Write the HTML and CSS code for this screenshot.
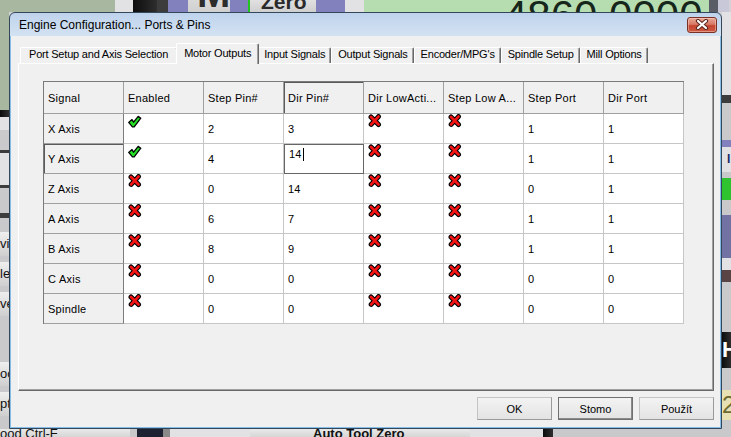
FILE: index.html
```html
<!DOCTYPE html>
<html lang="cs">
<head>
  <meta charset="UTF-8">
  <meta name="viewport" content="width=device-width, initial-scale=1.0">
  <title>Engine Configuration... Ports &amp; Pins</title>
  <link rel="stylesheet" href="styles.css">
</head>
<body>
  <!-- grid state icons -->
  <svg class="sprites" xmlns="http://www.w3.org/2000/svg">
    <symbol id="ico-yes" viewBox="0 0 14 14">
      <path d="M0.7 8.4 L4 5.6 L5.6 8.2 L10.2 2.4 L12.8 4.2 L6.2 12.8 L4.4 12.8 Z" fill="#24e024" stroke="#000" stroke-width="1.3" stroke-linejoin="round"/>
    </symbol>
    <symbol id="ico-no" viewBox="0 0 14 14">
      <path d="M3 3 L10.5 10.5 M10.5 2.6 L3.2 10.4" stroke="#000" stroke-width="5" stroke-linecap="round"/>
      <path d="M3 3 L10.5 10.5 M10.5 2.6 L3.2 10.4" stroke="#f41414" stroke-width="2.8" stroke-linecap="round"/>
    </symbol>
  </svg>

  <div class="screen">
    <!-- Mach3 screen behind the dialog -->
    <div class="strip strip-top">
      <span class="seg w115 c-sage"></span>
      <span class="seg w18 c-pale"></span>
      <span class="seg w24 c-black"></span>
      <span class="seg w11 c-dark"></span>
      <span class="seg w20 c-violet"></span>
      <span class="seg w42 c-key key-m">M</span>
      <span class="seg w18 c-violet"></span>
      <span class="seg w2 c-led"></span>
      <span class="seg w66 c-key key-zero">Zero</span>
      <span class="seg w29 c-violet"></span>
      <span class="seg w19 c-pale"></span>
      <span class="seg w345 c-dro">4860.0000</span>
      <span class="seg w9 c-frame"></span>
      <span class="seg w11 c-lilac"></span>
    </div>

    <div class="side side-left">
      <span class="blk h98 c-sage"></span>
      <span class="blk h7 c-black"></span>
      <span class="blk h13 c-pale"></span>
      <span class="blk h20 c-grey"></span>
      <span class="blk h3 c-dark"></span>
      <span class="blk h32 c-pale"></span>
      <span class="blk h3 c-dark"></span>
      <span class="blk h25 c-grey"></span>
      <span class="blk h5 c-dark"></span>
      <span class="blk h14 c-grey"></span>
      <span class="blk h24 c-key cut">vi</span>
      <span class="blk h6 c-grey"></span>
      <span class="blk h24 c-key cut">le</span>
      <span class="blk h6 c-grey"></span>
      <span class="blk h24 c-key cut">ve</span>
      <span class="blk h46 c-grey"></span>
      <span class="blk h24 c-key cut">oo</span>
      <span class="blk h6 c-grey"></span>
      <span class="blk h24 c-key cut">pt</span>
      <span class="blk h13 c-grey"></span>
    </div>

    <div class="dialog">
      <div class="titlebar">
        <span class="title">Engine Configuration... Ports &amp; Pins</span>
        <button class="close" type="button">
          <svg width="14" height="11" viewBox="0 0 14 11">
            <path d="M3 2 L11 9 M11 2 L3 9" stroke="#5b2720" stroke-width="4.2" stroke-linecap="round"/>
            <path d="M3 2 L11 9 M11 2 L3 9" stroke="#fff" stroke-width="2.2" stroke-linecap="round"/>
          </svg>
        </button>
      </div>

      <div class="client">
        <div class="tabs">
          <div class="tab tab-first">Port Setup and Axis Selection</div>
          <div class="tab active">Motor Outputs</div>
          <div class="tab">Input Signals</div>
          <div class="tab">Output Signals</div>
          <div class="tab">Encoder/MPG's</div>
          <div class="tab">Spindle Setup</div>
          <div class="tab">Mill Options</div>
        </div>

        <div class="panel">
          <div class="grid">
            <div class="cell head">Signal</div>
            <div class="cell head">Enabled</div>
            <div class="cell head">Step Pin#</div>
            <div class="cell head cur">Dir Pin#</div>
            <div class="cell head">Dir LowActi...</div>
            <div class="cell head">Step Low A...</div>
            <div class="cell head">Step Port</div>
            <div class="cell head">Dir Port</div>

            <div class="cell row">X Axis</div>
            <div class="cell icon"><svg><use href="#ico-yes"/></svg></div>
            <div class="cell">2</div>
            <div class="cell">3</div>
            <div class="cell icon"><svg><use href="#ico-no"/></svg></div>
            <div class="cell icon"><svg><use href="#ico-no"/></svg></div>
            <div class="cell">1</div>
            <div class="cell">1</div>

            <div class="cell row cur">Y Axis</div>
            <div class="cell icon"><svg><use href="#ico-yes"/></svg></div>
            <div class="cell">4</div>
            <div class="cell edit">14<span class="caret"></span></div>
            <div class="cell icon"><svg><use href="#ico-no"/></svg></div>
            <div class="cell icon"><svg><use href="#ico-no"/></svg></div>
            <div class="cell">1</div>
            <div class="cell">1</div>

            <div class="cell row">Z Axis</div>
            <div class="cell icon"><svg><use href="#ico-no"/></svg></div>
            <div class="cell">0</div>
            <div class="cell">14</div>
            <div class="cell icon"><svg><use href="#ico-no"/></svg></div>
            <div class="cell icon"><svg><use href="#ico-no"/></svg></div>
            <div class="cell">0</div>
            <div class="cell">1</div>

            <div class="cell row">A Axis</div>
            <div class="cell icon"><svg><use href="#ico-no"/></svg></div>
            <div class="cell">6</div>
            <div class="cell">7</div>
            <div class="cell icon"><svg><use href="#ico-no"/></svg></div>
            <div class="cell icon"><svg><use href="#ico-no"/></svg></div>
            <div class="cell">1</div>
            <div class="cell">1</div>

            <div class="cell row">B Axis</div>
            <div class="cell icon"><svg><use href="#ico-no"/></svg></div>
            <div class="cell">8</div>
            <div class="cell">9</div>
            <div class="cell icon"><svg><use href="#ico-no"/></svg></div>
            <div class="cell icon"><svg><use href="#ico-no"/></svg></div>
            <div class="cell">1</div>
            <div class="cell">1</div>

            <div class="cell row">C Axis</div>
            <div class="cell icon"><svg><use href="#ico-no"/></svg></div>
            <div class="cell">0</div>
            <div class="cell">0</div>
            <div class="cell icon"><svg><use href="#ico-no"/></svg></div>
            <div class="cell icon"><svg><use href="#ico-no"/></svg></div>
            <div class="cell">0</div>
            <div class="cell">0</div>

            <div class="cell row">Spindle</div>
            <div class="cell icon"><svg><use href="#ico-no"/></svg></div>
            <div class="cell">0</div>
            <div class="cell">0</div>
            <div class="cell icon"><svg><use href="#ico-no"/></svg></div>
            <div class="cell icon"><svg><use href="#ico-no"/></svg></div>
            <div class="cell">0</div>
            <div class="cell">0</div>
          </div>
        </div>

        <div class="actions">
          <button class="btn" type="button">OK</button>
          <button class="btn default" type="button">Stomo</button>
          <button class="btn" type="button">Použít</button>
        </div>
      </div>
    </div>

    <div class="side side-right">
      <span class="blk h83 c-pale"></span>
      <span class="blk h8 c-dark"></span>
      <span class="blk h37 c-grey"></span>
      <span class="blk h7 c-violet"></span>
      <span class="blk h25 c-pale glyph-i">I</span>
      <span class="blk h6 c-grey"></span>
      <span class="blk h22 c-green"></span>
      <span class="blk h15 c-grey"></span>
      <span class="blk h43 c-slate"></span>
      <span class="blk h12 c-pale"></span>
      <span class="blk h12 c-brown"></span>
      <span class="blk h50 c-grey"></span>
      <span class="blk h36 c-black glyph-h">H</span>
      <span class="blk h22 c-grey"></span>
      <span class="blk h30 c-cream glyph-2">2</span>
      <span class="blk h9 c-grey"></span>
    </div>

    <div class="strip strip-bottom">
      <span class="seg w130 c-key label">ood Ctrl-F</span>
      <span class="seg w7 c-grey"></span>
      <span class="seg w26 c-navy"></span>
      <span class="seg w7 c-mid"></span>
      <span class="seg w80 c-pale"></span>
      <span class="seg w220 c-key label label-bold">Auto Tool Zero</span>
      <span class="seg w73 c-pale"></span>
      <span class="seg w10 c-black"></span>
      <span class="seg w178 c-grey"></span>
    </div>
  </div>
</body>
</html>
```

FILE: styles.css
```css
* {
  margin: 0;
  padding: 0;
  box-sizing: border-box;
}

body {
  width: 731px;
  height: 437px;
  overflow: hidden;
  font-family: "Liberation Sans", Arial, sans-serif;
  font-size: 11px;
  color: #000;
  background: #d2d2d6;
}

.sprites {
  display: none;
}

/* whole window: app behind, dialog in the middle cell */
.screen {
  display: grid;
  grid-template-columns: 9px 713px 9px;
  grid-template-rows: 12px 417px 8px;
  width: 731px;
  height: 437px;
}

.strip {
  grid-column: 1 / -1;
  display: flex;
  overflow: hidden;
}

.side {
  display: flex;
  flex-direction: column;
  overflow: hidden;
}

.seg,
.blk {
  display: block;
  flex: none;
  overflow: hidden;
  white-space: nowrap;
}

.w2 { width: 2px; }
.w7 { width: 7px; }
.w9 { width: 9px; }
.w10 { width: 10px; }
.w11 { width: 11px; }
.w18 { width: 18px; }
.w19 { width: 19px; }
.w20 { width: 20px; }
.w24 { width: 24px; }
.w26 { width: 26px; }
.w29 { width: 29px; }
.w42 { width: 42px; }
.w66 { width: 66px; }
.w73 { width: 73px; }
.w80 { width: 80px; }
.w115 { width: 115px; }
.w130 { width: 130px; }
.w178 { width: 178px; }
.w220 { width: 220px; }
.w345 { width: 345px; }

.h3 { height: 3px; }
.h5 { height: 5px; }
.h6 { height: 6px; }
.h7 { height: 7px; }
.h8 { height: 8px; }
.h9 { height: 9px; }
.h12 { height: 12px; }
.h13 { height: 13px; }
.h14 { height: 14px; }
.h15 { height: 15px; }
.h20 { height: 20px; }
.h22 { height: 22px; }
.h24 { height: 24px; }
.h25 { height: 25px; }
.h30 { height: 30px; }
.h32 { height: 32px; }
.h36 { height: 36px; }
.h37 { height: 37px; }
.h43 { height: 43px; }
.h46 { height: 46px; }
.h50 { height: 50px; }
.h83 { height: 83px; }
.h98 { height: 98px; }

.c-sage { background: #a8b79f; }
.c-pale { background: #e2e2e4; }
.c-grey { background: #c9c9cc; }
.c-mid { background: #8a8a8a; }
.c-dark { background: #3c3c3c; }
.c-black { background: linear-gradient(90deg, #0c0c0c, #2e2e2e); }
.c-navy { background: #1c2232; }
.c-violet { background: #8381bd; }
.c-slate { background: #7373a3; }
.c-lilac { background: #c9c8d8; }
.c-led { background: #22c422; }
.c-green { background: #2fc42f; }
.c-brown { background: #5a4345; }
.c-cream { background: #e6e0b2; }
.c-frame { background: #5a5c66; }
.c-key { background: linear-gradient(#eeeeee, #cfcfcf); }
.c-dro { background: #b6ddb0; }

.key-m {
  padding-left: 9px;
  font-weight: bold;
  font-size: 40px;
  line-height: 40px;
  margin-top: -27px;
  height: 40px;
  color: #2c2c2c;
}

.key-zero {
  padding-left: 11px;
  font-weight: bold;
  font-size: 21px;
  line-height: 21px;
  margin-top: -9px;
  height: 21px;
  color: #2a2a2a;
}

.c-dro {
  padding-left: 140px;
  font-size: 42px;
  line-height: 42px;
  height: 42px;
  margin-top: -5px;
  color: #17261a;
}

.cut {
  font-size: 13px;
  line-height: 24px;
  color: #111;
}

.glyph-i {
  padding-left: 5px;
  font-size: 12px;
  font-weight: bold;
  line-height: 25px;
  color: #1c2a6a;
}

.glyph-h {
  font-size: 22px;
  font-weight: bold;
  line-height: 36px;
  color: #fff;
}

.glyph-2 {
  font-size: 24px;
  line-height: 30px;
  color: #6c6a30;
}

.label {
  font-size: 13px;
  line-height: 13px;
  height: 13px;
  margin-top: -2px;
  color: #111;
}

.label-bold {
  padding-left: 63px;
  font-weight: bold;
}

/* dialog window */
.dialog {
  display: flex;
  flex-direction: column;
  border: 1px solid #34465a;
  border-radius: 6px 6px 0 0;
  background: linear-gradient(#bed3ec, #d5e3f2 24px);
  overflow: hidden;
}

.titlebar {
  display: flex;
  align-items: center;
  justify-content: space-between;
  height: 23px;
  padding: 0 4px 0 9px;
}

.title {
  font-size: 12px;
  color: #000;
}

.close {
  display: flex;
  align-items: center;
  justify-content: center;
  width: 30px;
  height: 16px;
  border: 1px solid #7a3226;
  border-radius: 3px;
  background: linear-gradient(#e8a896, #d77a66 45%, #c5452f 55%, #cc5a42);
  box-shadow: inset 0 0 0 1px rgba(255, 220, 210, 0.45);
}

.client {
  flex: 1;
  display: flex;
  flex-direction: column;
  padding: 7px 6px 0 7px;
  background: #f0f0f0;
  border: 1px solid #86bde6;
  border-top: none;
}

/* tab strip */
.tabs {
  display: flex;
  align-items: flex-end;
  height: 20px;
  padding-left: 2px;
}

.tab {
  height: 16px;
  padding: 0 5px 0 6px;
  border: 1px solid;
  border-color: #fff #696969 transparent #fff;
  border-bottom: none;
  border-radius: 2px 2px 0 0;
  box-shadow: inset -1px 0 0 #a0a0a0;
  line-height: 13px;
  letter-spacing: -0.2px;
  white-space: nowrap;
}

.tab-first {
  padding: 0 9px 0 8px;
}

.active {
  position: relative;
  z-index: 1;
  height: 21px;
  margin: 0 -2px -1px;
  padding: 3px 7px 0 7px;
  background: #f0f0f0;
}

.panel {
  height: 328px;
  padding: 17px 0 0 24px;
  border: 1px solid;
  border-color: #fff #696969 #696969 #fff;
  box-shadow: inset -1px -1px 0 #a0a0a0;
}

/* motor outputs grid */
.grid {
  display: grid;
  grid-template-columns: repeat(8, 80px);
  grid-template-rows: 32px repeat(7, 30px);
  width: 641px;
  border-left: 1px solid #7a7a7a;
  border-top: 1px solid #7a7a7a;
}

.cell {
  display: flex;
  align-items: center;
  padding: 0 4px;
  background: #fff;
  border-right: 1px solid #c6c6c6;
  border-bottom: 1px solid #c6c6c6;
  letter-spacing: 0.25px;
  white-space: nowrap;
  overflow: hidden;
}

.head,
.row {
  background: #f0f0f0;
  border-color: #a0a0a0;
}

.row {
  border-right-color: #7c7c7c;
}

.cur {
  box-shadow: inset 1px 1px 0 #5a5a5a;
}

.icon {
  align-items: flex-start;
}

.icon svg {
  width: 14px;
  height: 14px;
}

.edit {
  align-items: flex-start;
  padding: 3px 4px;
  border: 1px solid #666;
  line-height: 13px;
}

.caret {
  width: 1px;
  height: 13px;
  margin-left: 1px;
  background: #000;
}

/* dialog buttons */
.actions {
  display: flex;
  justify-content: flex-end;
  gap: 6px;
  margin-top: 6px;
}

.btn {
  width: 75px;
  height: 23px;
  font-family: "Liberation Sans", Arial, sans-serif;
  font-size: 11px;
  color: #000;
  background: linear-gradient(#f3f3f3, #e3e3e3);
  border: 1px solid;
  border-color: #c4c4c4 #9a9a9a #9a9a9a #c4c4c4;
}

.default {
  border-color: #707070;
  box-shadow: inset -1px -1px 0 #8a8a8a;
}
```
